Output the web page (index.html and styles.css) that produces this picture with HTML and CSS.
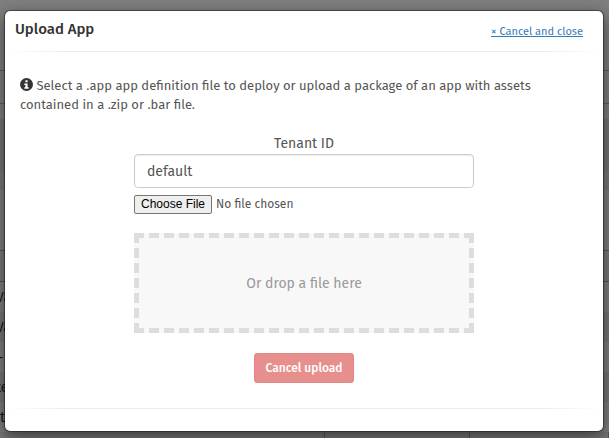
FILE: index.html
```
<!DOCTYPE html>
<html lang="en">
<head>
<meta charset="utf-8">
<title>Upload App</title>
<link rel="stylesheet" href="styles.css">
</head>
<body>
<div class="page" aria-hidden="true">
  <div class="page-top"></div>
  <div class="page-bar"></div>
  <div class="page-gap"></div>
  <div class="page-band"></div>
  <div class="page-shade"></div>
  <div class="page-space"></div>
  <div class="page-head"></div>
  <div class="row">Va</div>
  <div class="row">Va</div>
  <div class="row">–</div>
  <div class="row">te</div>
  <div class="row row-end">t</div>
  <div class="row row-split"><span></span><span></span><span></span></div>
</div>
<div class="backdrop">
  <section class="modal" role="dialog" aria-labelledby="title">
    <header class="modal-header">
      <h1 class="title" id="title">Upload App</h1>
      <a class="close" href="#">× Cancel and close</a>
    </header>
    <hr class="rule">
    <div class="modal-body">
      <p class="intro"><svg class="info" viewBox="0 0 12 12" aria-hidden="true"><circle cx="6" cy="6" r="6" fill="#333"/><path fill="#fff" d="M5 2h2v2H5zM4 5h3v3.500h1V10H4V8.500h1v-2H4z"/></svg> Select a .app app definition file to deploy or upload a package of an app with assets contained in a .zip or .bar file.</p>
      <form class="form">
        <label class="label" for="tenant">Tenant ID</label>
        <input class="text" id="tenant" type="text" value="default">
        <input class="file" type="file" aria-label="App file">
        <div class="drop">Or drop a file here</div>
        <button class="cancel" type="button" disabled>Cancel upload</button>
      </form>
    </div>
    <hr class="rule">
  </section>
</div>
</body>
</html>
```
FILE: styles.css
```
* { box-sizing: border-box; }
body {
  margin: 0;
  color: #555;
  font: 13px/19px "Fira Sans", "Noto Sans", sans-serif;
}
.page {
  position: fixed;
  inset: 0;
  overflow: hidden;
  background: #fff;
}
.page-top { height: 71px; border-bottom: 1px solid #bbb; }
.page-bar { height: 33px; border-bottom: 1px solid #bbb; }
.page-gap { height: 15px; }
.page-band { height: 51px; background: #e8e8e8; }
.page-shade { height: 20px; background: #f0f0f0; }
.page-space { height: 61px; border-bottom: 1px solid #aaa; }
.page-head { height: 31px; background: #f4f4f4; border-bottom: 1px solid #aaa; }
.row { height: 30px; margin-left: -4px; line-height: 32px; color: #333; font-size: 14px; }
.row:nth-child(odd) { background: #eee; }
.row-end { margin-left: 0; }
.row-split { display: grid; grid-template-columns: 329px 145px 1fr; }
.row-split span { border-right: 1px solid #aaa; }
.backdrop {
  position: fixed;
  inset: 0;
  overflow: auto;
  padding: 10px 5px 0 4px;
  background: rgba(0, 0, 0, 0.5);
}
.modal {
  padding-bottom: 22px;
  background: #fff;
  background-clip: padding-box;
  border: 1px solid rgba(0, 0, 0, 0.4);
  border-radius: 6px;
  box-shadow: 0 5px 15px rgba(0, 0, 0, 0.5);
}
.modal-header {
  display: flex;
  align-items: center;
  justify-content: space-between;
  height: 40px;
  padding: 0 20px 4px 10px;
}
.title { margin: 0; color: #333; font-size: 15px; font-weight: 500; }
.close { margin-top: 4px; color: #337ab7; font-size: 11px; text-decoration: underline; }
.rule {
  height: 1px;
  margin: 0;
  border: 0;
  background: linear-gradient(to right, transparent, #ececec 10%, #ececec 90%, transparent);
}
.modal-body { padding: 24px 15px 25px; }
.intro { margin: 0; }
.info { width: 13px; height: 13px; vertical-align: -1px; }
.form {
  display: flex;
  flex-direction: column;
  align-items: center;
  width: 60%;
  max-width: 340px;
  min-width: 240px;
  margin: 20px auto 0;
}
.label { font-size: 14px; }
.text {
  width: 100%;
  height: 34px;
  margin: 1px 0 6px;
  padding: 6px 12px;
  color: #555;
  background: #fff;
  border: 1px solid #ccc;
  border-radius: 4px;
  box-shadow: inset 0 1px 1px rgba(0, 0, 0, 0.075);
  font: 14px "Fira Sans", "Noto Sans", sans-serif;
}
.file { width: 100%; height: 20px; color: #555; font: 12px/20px "Fira Sans", "Noto Sans", sans-serif; }
.file::file-selector-button {
  height: 19px;
  margin: 0 4px 0 0;
  padding: 0 6px;
  color: #000;
  background: #efefef;
  border: 1px solid #767676;
  border-radius: 2px;
  font: 12px "Liberation Sans", sans-serif;
}
.drop {
  display: flex;
  align-items: center;
  justify-content: center;
  width: 100%;
  height: 100px;
  margin: 19px 0 20px;
  color: #999;
  background: #f8f8f8;
  border: 5px dashed #ddd;
  font-size: 14px;
}
.cancel {
  height: 30px;
  padding: 0 10px;
  color: #fff;
  background: #d0211c;
  border: 1px solid #c01611;
  border-radius: 3px;
  opacity: 0.5;
  font: 500 12px "Fira Sans", "Noto Sans", sans-serif;
}
```
